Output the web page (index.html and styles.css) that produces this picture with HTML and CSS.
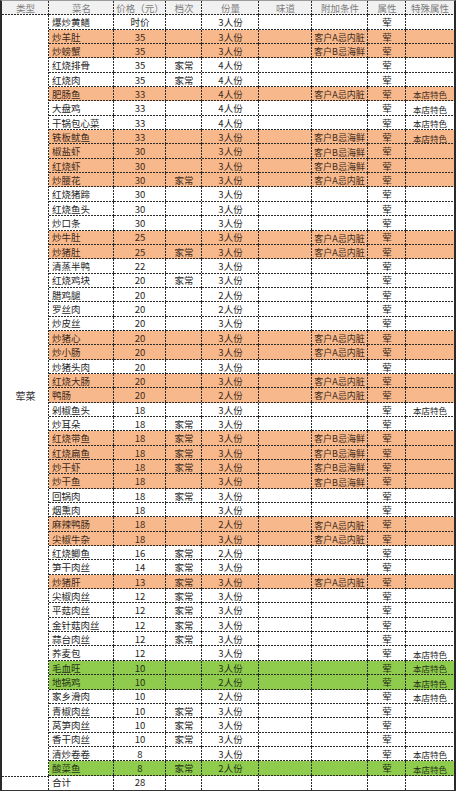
FILE: index.html
```html
<!DOCTYPE html>
<html lang="zh">
<head>
<meta charset="utf-8">
<title>菜单</title>
<link rel="stylesheet" href="styles.css">
</head>
<body>
<div class="sheet">
  <div class="r h"><span>类型</span><span>菜名</span><span>价格（元）</span><span>档次</span><span>份量</span><span>味道</span><span>附加条件</span><span>属性</span><span>特殊属性</span></div>
  <span class="type">荤菜</span>
  <div class="r"><span class="n">爆炒黄鳝</span><span>时价</span><span></span><span>3人份</span><span></span><span></span><span>荤</span><span></span></div>
  <div class="r o"><span class="n">炒羊肚</span><span>35</span><span></span><span>3人份</span><span></span><span class="c">客户A忌内脏</span><span>荤</span><span></span></div>
  <div class="r o"><span class="n">炒螃蟹</span><span>35</span><span></span><span>3人份</span><span></span><span class="c">客户B忌海鲜</span><span>荤</span><span></span></div>
  <div class="r"><span class="n">红烧排骨</span><span>35</span><span>家常</span><span>4人份</span><span></span><span></span><span>荤</span><span></span></div>
  <div class="r"><span class="n">红烧肉</span><span>35</span><span>家常</span><span>4人份</span><span></span><span></span><span>荤</span><span></span></div>
  <div class="r o"><span class="n">肥肠鱼</span><span>33</span><span></span><span>4人份</span><span></span><span class="c">客户A忌内脏</span><span>荤</span><span class="s">本店特色</span></div>
  <div class="r"><span class="n">大盘鸡</span><span>33</span><span></span><span>4人份</span><span></span><span></span><span>荤</span><span class="s">本店特色</span></div>
  <div class="r"><span class="n">干锅包心菜</span><span>33</span><span></span><span>4人份</span><span></span><span></span><span>荤</span><span class="s">本店特色</span></div>
  <div class="r o"><span class="n">铁板鱿鱼</span><span>33</span><span></span><span>3人份</span><span></span><span class="c">客户B忌海鲜</span><span>荤</span><span class="s">本店特色</span></div>
  <div class="r o"><span class="n">椒盐虾</span><span>30</span><span></span><span>3人份</span><span></span><span class="c">客户B忌海鲜</span><span>荤</span><span></span></div>
  <div class="r o"><span class="n">红烧虾</span><span>30</span><span></span><span>3人份</span><span></span><span class="c">客户B忌海鲜</span><span>荤</span><span></span></div>
  <div class="r o"><span class="n">炒腰花</span><span>30</span><span>家常</span><span>3人份</span><span></span><span class="c">客户A忌内脏</span><span>荤</span><span></span></div>
  <div class="r"><span class="n">红烧猪蹄</span><span>30</span><span></span><span>3人份</span><span></span><span></span><span>荤</span><span></span></div>
  <div class="r"><span class="n">红烧鱼头</span><span>30</span><span></span><span>3人份</span><span></span><span></span><span>荤</span><span></span></div>
  <div class="r"><span class="n">炒口条</span><span>30</span><span></span><span>3人份</span><span></span><span></span><span>荤</span><span></span></div>
  <div class="r o"><span class="n">炒牛肚</span><span>25</span><span></span><span>3人份</span><span></span><span class="c">客户A忌内脏</span><span>荤</span><span></span></div>
  <div class="r o"><span class="n">炒猪肚</span><span>25</span><span>家常</span><span>3人份</span><span></span><span class="c">客户A忌内脏</span><span>荤</span><span></span></div>
  <div class="r"><span class="n">清蒸半鸭</span><span>22</span><span></span><span>3人份</span><span></span><span></span><span>荤</span><span></span></div>
  <div class="r"><span class="n">红烧鸡块</span><span>20</span><span>家常</span><span>3人份</span><span></span><span></span><span>荤</span><span></span></div>
  <div class="r"><span class="n">腊鸡腿</span><span>20</span><span></span><span>2人份</span><span></span><span></span><span>荤</span><span></span></div>
  <div class="r"><span class="n">罗丝肉</span><span>20</span><span></span><span>2人份</span><span></span><span></span><span>荤</span><span></span></div>
  <div class="r"><span class="n">炒皮丝</span><span>20</span><span></span><span>3人份</span><span></span><span></span><span>荤</span><span></span></div>
  <div class="r o"><span class="n">炒猪心</span><span>20</span><span></span><span>3人份</span><span></span><span class="c">客户A忌内脏</span><span>荤</span><span></span></div>
  <div class="r o"><span class="n">炒小肠</span><span>20</span><span></span><span>3人份</span><span></span><span class="c">客户A忌内脏</span><span>荤</span><span></span></div>
  <div class="r"><span class="n">炒猪头肉</span><span>20</span><span></span><span>3人份</span><span></span><span></span><span>荤</span><span></span></div>
  <div class="r o"><span class="n">红烧大肠</span><span>20</span><span></span><span>3人份</span><span></span><span class="c">客户A忌内脏</span><span>荤</span><span></span></div>
  <div class="r o"><span class="n">鸭肠</span><span>20</span><span></span><span>2人份</span><span></span><span class="c">客户A忌内脏</span><span>荤</span><span></span></div>
  <div class="r"><span class="n">剁椒鱼头</span><span>18</span><span></span><span>3人份</span><span></span><span></span><span>荤</span><span class="s">本店特色</span></div>
  <div class="r"><span class="n">炒耳朵</span><span>18</span><span>家常</span><span>3人份</span><span></span><span></span><span>荤</span><span></span></div>
  <div class="r o"><span class="n">红烧带鱼</span><span>18</span><span>家常</span><span>3人份</span><span></span><span class="c">客户B忌海鲜</span><span>荤</span><span></span></div>
  <div class="r o"><span class="n">红烧扁鱼</span><span>18</span><span>家常</span><span>3人份</span><span></span><span class="c">客户B忌海鲜</span><span>荤</span><span></span></div>
  <div class="r o"><span class="n">炒干虾</span><span>18</span><span>家常</span><span>3人份</span><span></span><span class="c">客户B忌海鲜</span><span>荤</span><span></span></div>
  <div class="r o"><span class="n">炒干鱼</span><span>18</span><span></span><span>3人份</span><span></span><span class="c">客户B忌海鲜</span><span>荤</span><span></span></div>
  <div class="r"><span class="n">回锅肉</span><span>18</span><span>家常</span><span>3人份</span><span></span><span></span><span>荤</span><span></span></div>
  <div class="r"><span class="n">烟熏肉</span><span>18</span><span></span><span>3人份</span><span></span><span></span><span>荤</span><span></span></div>
  <div class="r o"><span class="n">麻辣鸭肠</span><span>18</span><span></span><span>2人份</span><span></span><span class="c">客户A忌内脏</span><span>荤</span><span></span></div>
  <div class="r o"><span class="n">尖椒牛杂</span><span>18</span><span></span><span>3人份</span><span></span><span class="c">客户A忌内脏</span><span>荤</span><span></span></div>
  <div class="r"><span class="n">红烧鲫鱼</span><span>16</span><span>家常</span><span>2人份</span><span></span><span></span><span>荤</span><span></span></div>
  <div class="r"><span class="n">笋干肉丝</span><span>14</span><span>家常</span><span>3人份</span><span></span><span></span><span>荤</span><span></span></div>
  <div class="r o"><span class="n">炒猪肝</span><span>13</span><span>家常</span><span>3人份</span><span></span><span class="c">客户A忌内脏</span><span>荤</span><span></span></div>
  <div class="r"><span class="n">尖椒肉丝</span><span>12</span><span>家常</span><span>3人份</span><span></span><span></span><span>荤</span><span></span></div>
  <div class="r"><span class="n">平菇肉丝</span><span>12</span><span>家常</span><span>3人份</span><span></span><span></span><span>荤</span><span></span></div>
  <div class="r"><span class="n">金针菇肉丝</span><span>12</span><span>家常</span><span>3人份</span><span></span><span></span><span>荤</span><span></span></div>
  <div class="r"><span class="n">蒜台肉丝</span><span>12</span><span>家常</span><span>3人份</span><span></span><span></span><span>荤</span><span></span></div>
  <div class="r"><span class="n">荞麦包</span><span>12</span><span></span><span>3人份</span><span></span><span></span><span>荤</span><span class="s">本店特色</span></div>
  <div class="r g"><span class="n">毛血旺</span><span>10</span><span></span><span>3人份</span><span></span><span></span><span>荤</span><span class="s">本店特色</span></div>
  <div class="r g"><span class="n">地锅鸡</span><span>10</span><span></span><span>2人份</span><span></span><span></span><span>荤</span><span class="s">本店特色</span></div>
  <div class="r"><span class="n">家乡滑肉</span><span>10</span><span></span><span>2人份</span><span></span><span></span><span>荤</span><span class="s">本店特色</span></div>
  <div class="r"><span class="n">青椒肉丝</span><span>10</span><span>家常</span><span>3人份</span><span></span><span></span><span>荤</span><span></span></div>
  <div class="r"><span class="n">莴笋肉丝</span><span>10</span><span>家常</span><span>3人份</span><span></span><span></span><span>荤</span><span></span></div>
  <div class="r"><span class="n">香干肉丝</span><span>10</span><span>家常</span><span>3人份</span><span></span><span></span><span>荤</span><span></span></div>
  <div class="r"><span class="n">清炒卷卷</span><span>8</span><span></span><span>3人份</span><span></span><span></span><span>荤</span><span class="s">本店特色</span></div>
  <div class="r g"><span class="n">酸菜鱼</span><span>8</span><span>家常</span><span>2人份</span><span></span><span></span><span>荤</span><span class="s">本店特色</span></div>
  <div class="r t"><span class="lead"></span><span class="n">合计</span><span>28</span><span></span><span></span><span></span><span></span><span></span><span></span></div>
</div>
</body>
</html>
```
FILE: styles.css
```css
html, body {
  margin: 0;
  padding: 0;
  background: #ffffff;
}

.sheet {
  --line: #2b2b2b;
  --dash-h: repeating-linear-gradient(to right, var(--line) 0 2px, transparent 2px 3px);
  --dash-v: repeating-linear-gradient(to bottom, var(--line) 0 2px, transparent 2px 3px);
  width: 456px;
  box-sizing: border-box;
  border-left: 2px solid #2a2a2a;
  border-right: 2px solid #2a2a2a;
  border-top: 1px solid #9a9a9a;
  border-bottom: 1px solid #333333;
  display: grid;
  grid-template-columns: 47px 65px 52px 36px 57px 53px 56px 38px 48px;
  grid-auto-rows: 14.35px;
  font-family: "Noto Sans CJK SC", "Liberation Sans", sans-serif;
  font-size: 9.5px;
  color: #262626;
}

.r {
  display: contents;
}

.r > span,
.type {
  --fill: transparent;
  box-sizing: border-box;
  display: flex;
  align-items: center;
  justify-content: center;
  padding-top: 1px;
  line-height: 1;
  white-space: nowrap;
  overflow: hidden;
  background:
    var(--dash-h) left bottom / 100% 1px no-repeat,
    var(--dash-v) right top / 1px 100% no-repeat,
    var(--fill);
}

.r > span:last-child {
  background:
    var(--dash-h) left bottom / 100% 1px no-repeat,
    var(--fill);
}

.r > span.n {
  justify-content: flex-start;
  padding-left: 3px;
}

.r > span.c {
  font-size: 9px;
  padding-right: 1px;
}

.r > span.s {
  font-size: 8.5px;
}

.h > span {
  --fill: #f1f1f1;
  color: #7e7e7e;
}

.o > span {
  --fill: #f7b98b;
  color: #3f2a1c;
}

.g > span {
  --fill: #8fcb4c;
  color: #26331a;
}

.t > span {
  background:
    var(--dash-v) right top / 1px 100% no-repeat,
    var(--fill);
}

.t > span.lead {
  background:
    var(--dash-h) left top / 100% 1px no-repeat,
    var(--dash-v) right top / 1px 100% no-repeat;
}

.t > span:last-child {
  background: none;
}

.type {
  grid-column: 1;
  grid-row: 2 / span 53;
  color: #333333;
  font-size: 10px;
  background: var(--dash-v) right top / 1px 100% no-repeat;
}
```
